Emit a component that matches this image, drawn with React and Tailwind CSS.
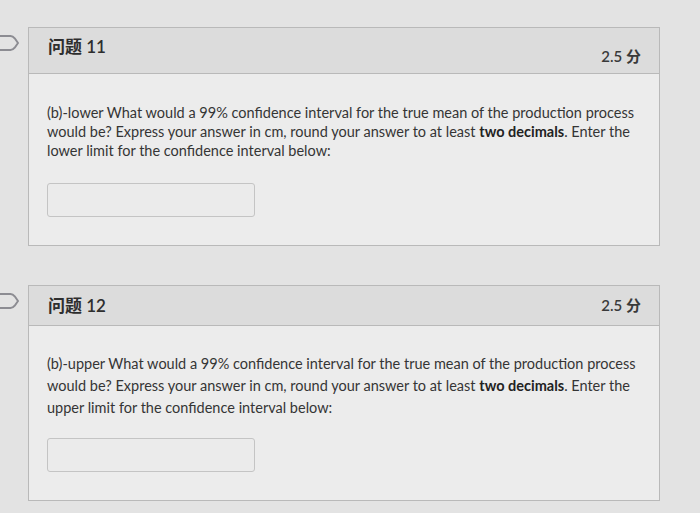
import React from "react";

const Flag = () => (
  <svg width="20" height="18" viewBox="0 0 20 18" className="text-[#8c8c92]">
    <path d="M-2 2h12.5c2 0 3 .8 4.2 2.3L18 9l-3.3 4.7C13.5 15.2 12.5 16 10.5 16H-2z" fill="none" stroke="currentColor" strokeWidth="2" strokeLinejoin="round" />
  </svg>
);

function Question({ num, kind, header, titleCls, scoreCls, bodyPt, lead, inputMt, mt }) {
  return (
    <div className={`relative ${mt}`}>
      <div className="absolute left-0 top-[7px]">
        <Flag />
      </div>
      <div className="ml-[28px] w-[632px] border border-[#b9b9b9] bg-[#ececec]">
        <div className={`flex justify-between border-b border-[#b9b9b9] bg-[#dcdcdc] pl-[19px] pr-[18px] ${header}`}>
          <span className={`text-[17px] font-semibold text-[#2e2e2e] ${titleCls}`}>问题 {num}</span>
          <span className={`text-[15px] font-semibold text-[#3a3a3a] ${scoreCls}`}>2.5 分</span>
        </div>
        <div className={`pl-[18px] pr-[20px] pb-[28px] ${bodyPt}`}>
          <p className={`text-[14.5px] text-[#353535] ${lead}`}>
            (b)-{kind} What would a 99% confidence interval for the true mean of the production process
            would be? Express your answer in cm, round your answer to at least <b className="font-bold text-[#222]">two decimals</b>. Enter the
            {" "}{kind} limit for the confidence interval below:
          </p>
          <div className={`h-[34px] w-[208px] rounded-[3px] border border-[#c4c4c4] bg-[#ebebeb] ${inputMt}`} />
        </div>
      </div>
    </div>
  );
}

export default function App() {
  return (
    <div
      className="h-[513px] w-[700px] overflow-hidden bg-[#e3e3e3] pt-[27px]"
      style={{ fontFamily: "Lato, 'Noto Sans CJK SC', sans-serif" }}
    >
      <Question
        num={11}
        kind="lower"
        header="h-[46px] items-start"
        titleCls="pt-[6px]"
        scoreCls="pt-[17px]"
        bodyPt="pt-[29px]"
        lead="leading-[19px]"
        inputMt="mt-[23px]"
        mt=""
      />
      <Question
        num={12}
        kind="upper"
        header="h-[40px] items-center"
        titleCls=""
        scoreCls=""
        bodyPt="pt-[27px]"
        lead="leading-[22px]"
        inputMt="mt-[19px]"
        mt="mt-[39px]"
      />
    </div>
  );
}
